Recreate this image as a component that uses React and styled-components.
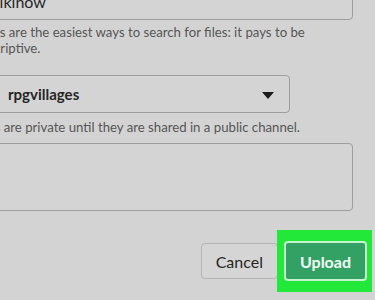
import React from 'react';
import styled, { createGlobalStyle } from 'styled-components';

const GlobalStyle = createGlobalStyle`
  html, body {
    margin: 0;
    padding: 0;
    background: #d3d3d3;
    overflow: hidden;
  }
  body {
    font-family: Lato, "Open Sans", sans-serif;
    -webkit-font-smoothing: antialiased;
  }
`;

const Page = styled.div`
  width: 375px;
  height: 300px;
  overflow: hidden;
  background: #d3d3d3;
`;

const Form = styled.div`
  margin-left: -26px;
  margin-top: -18px;
  width: 379px;
  display: flex;
  flex-direction: column;
`;

const Field = styled.div`
  box-sizing: border-box;
  height: ${p => p.height || 38}px;
  width: ${p => p.width || 379}px;
  margin-top: ${p => p.gap || 0}px;
  border: 1px solid #9e9e9e;
  border-radius: 4px;
  background: #d4d4d4;
  display: flex;
  align-items: center;
  justify-content: space-between;
  padding: 0 15px 0 ${p => p.indent || 14}px;
  font-size: ${p => p.size || 16}px;
  color: #262626;
`;

const Hint = styled.p`
  margin: ${p => p.gap || 4}px 0 0;
  font-size: 13.2px;
  line-height: 16px;
  color: #565656;
  width: 345px;
`;

const Value = styled.span`
  font-weight: ${p => (p.bold ? 700 : 400)};
`;

const Caret = styled.span`
  width: 0;
  height: 0;
  border-left: 6px solid transparent;
  border-right: 6px solid transparent;
  border-top: 7px solid #1c1c1c;
  margin-top: 2px;
`;

const Actions = styled.div`
  display: flex;
  justify-content: flex-end;
  align-items: center;
  margin: 19px -19px 0 0;
`;

const Button = styled.button`
  box-sizing: border-box;
  height: ${p => (p.primary ? 40 : 36)}px;
  padding: 0 ${p => (p.primary ? 14 : 14)}px;
  border-radius: 4px;
  font-family: Lato, "Open Sans", sans-serif;
  font-size: 16px;
  font-weight: ${p => (p.primary ? 700 : 400)};
  color: ${p => (p.primary ? '#f4fff7' : '#262626')};
  background: ${p => (p.primary ? '#33a064' : '#d5d5d5')};
  border: ${p => (p.primary ? '2px solid #c6f3cd' : '1px solid #b4b4b4')};
  cursor: pointer;
`;

const Highlight = styled.span`
  display: inline-flex;
  padding: 11px 5px 11px 7px;
  margin-left: -1px;
  background: #22e83a;
`;

export default function App() {
  return (
    <Page>
      <GlobalStyle />
      <Form>
        <Field indent={12}>
          <Value>wikinow</Value>
        </Field>
        <Hint>
          Titles are the easiest ways to search for files: it pays to be
          descriptive.
        </Hint>
        <Field width={316} gap={19} indent={33} size={15}>
          <Value bold>rpgvillages</Value>
          <Caret />
        </Field>
        <Hint gap={6}>Files are private until they are shared in a public channel.</Hint>
        <Field height={68} gap={8} />
        <Actions>
          <Button>Cancel</Button>
          <Highlight>
            <Button primary>Upload</Button>
          </Highlight>
        </Actions>
      </Form>
    </Page>
  );
}
